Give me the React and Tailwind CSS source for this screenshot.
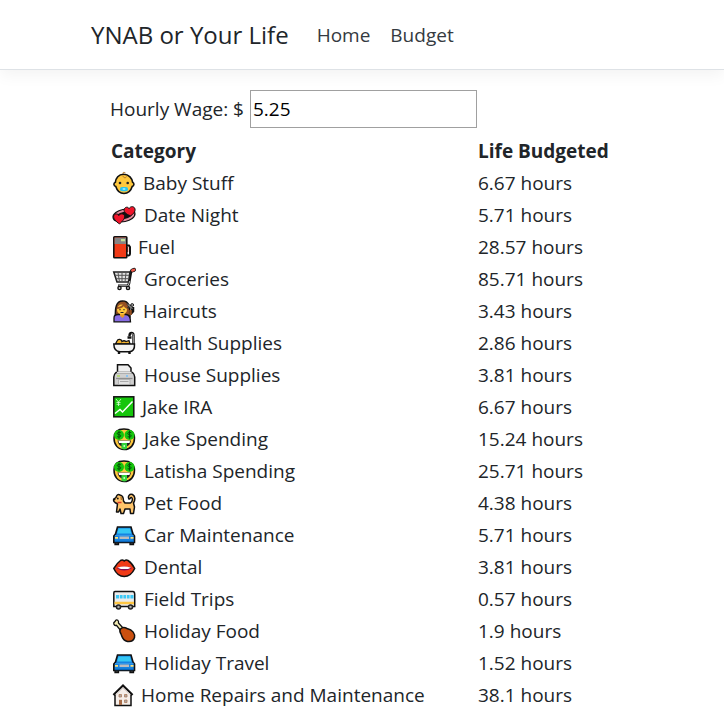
import React from "react";

const paths = {
  baby: {
    w: 23,
    art: (
      <>
        <path d="M11.5 3.200C6.500 3.200 3.800 7.500 3.400 11.200C1.200 12 1.500 15 3.800 15.500C5 19.500 8 22.500 12 22.500S19 19.500 20.200 15.500C22.300 15 22.500 12 20.600 11.200C20.200 7.500 17 3.200 11.500 3.200Z" fill="#ffc83d" stroke="#111" strokeWidth="1.600" />
        <path d="M11.500 3C10 1.500 12 .8 13.500 2M11 4.500C11 7 14 7.500 14.500 5.500" fill="none" stroke="#b07528" strokeWidth="1" />
        <circle cx="8" cy="12" r="1.300" fill="#222" />
        <circle cx="15.700" cy="12" r="1.300" fill="#222" />
        <rect x="8" y="16" width="8" height="4.300" rx="2" fill="#28c4ee" />
        <rect x="10.500" y="17" width="3" height="2" rx="1" fill="#8ce8ff" />
      </>
    ),
  },
  hearts: {
    w: 24,
    art: (
      <>
        <ellipse cx="12" cy="12.500" rx="9.500" ry="4.500" transform="rotate(-12 12 12.500)" fill="#111" stroke="#111" strokeWidth="4.500" />
        <ellipse cx="12" cy="12.500" rx="9.500" ry="4.500" transform="rotate(-12 12 12.500)" fill="none" stroke="#e58b9d" strokeWidth="2" />
        <path d="M18.500 12.800C13.500 11 11 8.500 12.500 5.500C14 3.500 16.500 4 17 5.700C18.500 2.800 22.300 3 23 6C23.500 9 21 11.300 18.500 12.800Z" fill="#f0142a" stroke="#111" strokeWidth="1" />
        <path d="M7.500 21C4 18.500 .8 15.500 1.800 12.500C3.300 10 6 10.800 6.800 12.500C8.500 10 12 10.500 12.700 13C13 16 10 18.500 7.500 21Z" fill="#f0142a" stroke="#111" strokeWidth="1" />
      </>
    ),
  },
  fuel: {
    w: 18,
    art: (
      <>
        <path d="M15 10.500H17L18 12V18.500C18 21 15.500 21 15 19.500" fill="none" stroke="#111" strokeWidth="2" />
        <path d="M15.500 12V17" stroke="#c43220" strokeWidth="1.500" />
        <rect x="1.800" y="1.800" width="13" height="21" rx=".8" fill="#f03a17" stroke="#111" strokeWidth="1.600" />
        <path d="M2.600 2.600H14V9H2.600Z" fill="#858585" />
        <rect x="9" y="4" width="4" height="2.300" fill="#c3df98" />
      </>
    ),
  },
  cart: {
    w: 24,
    art: (
      <>
        <path d="M20.500 3.500L19 4.500L17 16.500L16 18.800H6" fill="none" stroke="#111" strokeWidth="2.600" />
        <path d="M1.800 5H18L16.500 15H5Z" fill="#e2e2e2" stroke="#222" strokeWidth="1.600" />
        <path d="M3 8.300H17M4 11.700H17M6 5.500L7.500 15M10 5.500V15M14 5.500L13 15" stroke="#555" strokeWidth="1" />
        <path d="M6.500 18.800H16L17.800 14" fill="none" stroke="#bbb" strokeWidth="1" />
        <path d="M20.300 3.500L22 2.800" stroke="#111" strokeWidth="4" strokeLinecap="round" />
        <path d="M20.300 3.500L22 2.800" stroke="#ef594a" strokeWidth="2.500" strokeLinecap="round" />
        <g fill="#ccc" stroke="#111" strokeWidth="1.400"><circle cx="7.500" cy="21" r="1.600" /><circle cx="16" cy="21" r="1.600" /></g>
      </>
    ),
  },
  haircut: {
    w: 23,
    art: (
      <>
        <path d="M3.500 18C3 9 4 2 10.500 2S18 7 18 18Z" fill="#965022" stroke="#111" strokeWidth="1.500" />
        <path d="M18 15L20.500 12V8" fill="none" stroke="#111" strokeWidth="3.500" />
        <path d="M2 22.800V19Q2 15.500 6 15.500H14Q18.500 15.500 18.500 22.800Z" fill="#886ce4" stroke="#111" strokeWidth="1.300" />
        <path d="M8 13H12.500V17L10.500 19L8 17Z" fill="#e89a24" />
        <circle cx="10" cy="10.500" r="5" fill="#ffc83d" />
        <path d="M5 9Q11 8.500 12 5Q13 8.500 15.500 9" fill="none" stroke="#965022" strokeWidth="1.800" />
        <path d="M18.500 16V11" stroke="#965022" strokeWidth="2.500" />
        <path d="M15 4.500L20.500 10M20.500 5.500L15.500 9" stroke="#333" strokeWidth="2" />
        <path d="M16 5.500L20 9.500" stroke="#bbb" strokeWidth="1" />
        <circle cx="20.200" cy="6" r="1.400" fill="#aaa" stroke="#222" />
        <path d="M8 10V11.200M12 10V11.200M8.500 13.500H11.500" stroke="#222" strokeWidth="1.100" />
      </>
    ),
  },
  bath: {
    w: 24,
    art: (
      <>
        <path d="M21.500 13V4.500Q21.500 2 19.500 2T17.500 5M15.500 6.500H19.500" fill="none" stroke="#111" strokeWidth="2.400" />
        <path d="M21.500 13V4.500Q21.500 2.500 19.500 2.500" fill="none" stroke="#aaa" strokeWidth=".8" />
        <path d="M3.500 13L5 10C6 7.500 9.500 8 10 10.500Q12 9 14 10.500L17 9.500L18 13Z" fill="#f5b32d" stroke="#111" strokeWidth="1.300" />
        <path d="M1.800 13H22.500Q23 20.500 17 20.800H8Q2 20.500 1.800 13Z" fill="#f3f3f3" stroke="#111" strokeWidth="1.500" />
        <path d="M7 21V23M17.500 21V23" stroke="#111" strokeWidth="2.400" />
      </>
    ),
  },
  printer: {
    w: 24,
    art: (
      <>
        <path d="M5.500 11V1.800H16L19 5V11" fill="#eee" stroke="#111" strokeWidth="1.500" />
        <path d="M4 9.500H20.500Q22.700 11.500 22.700 14V22.500H1.800V14Q1.800 11.500 4 9.500Z" fill="#cfcfcf" stroke="#111" strokeWidth="1.500" />
        <path d="M5 9.500H19.500" stroke="#e0e0e0" strokeWidth="1.500" />
        <path d="M4 15.500H20.500" stroke="#8f8f8f" strokeWidth="1.300" />
        <path d="M6.500 16.500H18V21.500H6.500Z" fill="#e2e2e2" stroke="#aaa" strokeWidth=".8" />
        <path d="M5 13H8" stroke="#a8d84e" strokeWidth="1.300" />
        <path d="M14 13H16" stroke="#70bfff" strokeWidth="1.300" />
        <path d="M8 18.500H16.500" stroke="#aaa" />
      </>
    ),
  },
  chart: {
    w: 22,
    art: (
      <>
        <rect x="1.800" y="1.800" width="20" height="20" fill="#16c60c" stroke="#111" strokeWidth="1.500" />
        <path d="M3 18.500L8 14.500L10.500 17L20.500 6.500" fill="none" stroke="#fff" strokeWidth="1.500" />
        <path d="M4 4L6.500 7L9 4M4.500 7.500H8.500M4.500 9.300H8.500M6.500 7V11" fill="none" stroke="#d9ffd6" strokeWidth=".8" />
      </>
    ),
  },
  money: {
    w: 24,
    art: (
      <>
        <path d="M12 2C6 2 2 5 2 11C2 18 6 22.500 12.200 22.500S22.500 18 22.500 11C22.500 5 18 2 12 2Z" fill="#ffc83d" stroke="#111" strokeWidth="1.500" />
        <circle cx="7" cy="8" r="5" fill="#16c60c" />
        <circle cx="17.500" cy="8" r="5" fill="#16c60c" />
        {[7, 17.5].map((x) => (
          <path key={x} transform={`translate(${x} 7.700)`} d="M1.800-2C-2.500-3.300-2.500 0 0 0S2.500 3.300-1.800 2M0-4V4" fill="none" stroke="#074a0b" strokeWidth="1" />
        ))}
        <path d="M5.500 13.500H19Q18 20 12.300 20T5.500 13.500Z" fill="#222" />
        <path d="M6.500 13.700H18L17.500 16H7Z" fill="#fff" />
        <path d="M9.500 16H15V21.500Q12.300 23.500 9.500 21.500Z" fill="#35d23b" />
        <path d="M11.500 18H13V20H11.500Z" fill="#b7ffba" />
      </>
    ),
  },
  dog: {
    w: 24,
    art: (
      <>
        <path d="M1.800 8L4 6.500Q5 2.500 8 4Q11.500 4.500 11.500 10L13 12H18.500C20.500 10.500 21 7.500 19.500 6.500C18 6 18.500 8.500 17 8C15.500 5.500 17.500 2.300 20.500 3.500C24 5.500 23 9.500 21.500 12L22.500 16L21.500 22.500H18.500L18 18H13L11.500 22.500H9L8 18L6.500 21H4.500L5.500 13L3 11.500Q1 10 1.800 8Z" fill="#ffc56b" stroke="#111" strokeWidth="1.500" strokeLinejoin="round" />
        <path d="M9 5.500L9.500 9" stroke="#b4772c" strokeWidth="1.500" />
        <path d="M5.500 11.500H9.500" stroke="#e03a28" strokeWidth="1.500" />
        <circle cx="5.800" cy="7.500" r=".9" fill="#111" />
        <circle cx="2.500" cy="8.200" r="1" fill="#111" />
      </>
    ),
  },
  car: {
    w: 24,
    art: (
      <>
        <path d="M3 18H6.500V21.500H3ZM18 18H21.500V21.500H18Z" fill="#444" stroke="#111" strokeWidth="1.300" />
        <path d="M5.500 4H19L21 11L22.500 13V19.500H1.800V13L3.500 11Z" fill="#1783e0" stroke="#111" strokeWidth="1.600" />
        <path d="M6.500 5.500H18L19.300 10.500H5.200Z" fill="#35c7f4" />
        <path d="M3 12.500H21.500" stroke="#3298ea" />
        <rect x="7.500" y="13.500" width="9.500" height="2.500" fill="#bcbcbc" />
        <path d="M3 14.800H6M18.500 14.800H21.500" stroke="#ffe37a" strokeWidth="1.800" />
        <path d="M3 18.500H21.500" stroke="#0b63b5" strokeWidth="1.300" />
      </>
    ),
  },
  mouth: {
    w: 24,
    art: (
      <>
        <path d="M1.800 13.500Q5 8 8.500 5.500Q10.500 4.500 12.200 6Q14 4.500 16 5.500Q20 8 22.700 13.500Q19 21.500 12.200 21.500T1.800 13.500Z" fill="#f03a17" stroke="#111" strokeWidth="1.500" />
        <path d="M4.500 13Q12 10 20 13Q12 18 4.500 13Z" fill="#820c55" />
        <path d="M5.500 12.700Q12 10.500 19 12.700L16 14H9Z" fill="#fff" />
      </>
    ),
  },
  bus: {
    w: 24,
    art: (
      <>
        <path d="M3 4.500H21Q22.500 4.500 22.700 7V19.500H1.800V6Q1.800 4.500 3 4.500Z" fill="#ececec" stroke="#111" strokeWidth="1.500" />
        <rect x="4" y="8" width="17.500" height="3.500" fill="#3cc8f5" />
        <path d="M7.500 8V12M11 8V12M14.500 8V12M18 8V12" stroke="#ececec" strokeWidth=".8" />
        <path d="M2.500 16H22" stroke="#ffc642" strokeWidth="2.500" />
        <g fill="#aaa" stroke="#222" strokeWidth="1.500"><circle cx="6.500" cy="20" r="2" /><circle cx="18.500" cy="20" r="2" /></g>
      </>
    ),
  },
  drumstick: {
    w: 24,
    art: (
      <>
        <path d="M1.800 5C1 3 3.500 3 3.500 1.500C5 .2 7 1.500 6.500 4L11.500 9.500L9 12L4.500 6.300Q2.500 7 1.800 5Z" fill="#f4edb4" stroke="#111" strokeWidth="1.300" />
        <path d="M8.500 10Q11 7.500 15 9.500C21 11 23 15 22.500 18.500Q21 23.300 15.500 22.500C10 21.500 10 17 9 15Q7 12 8.500 10Z" fill="#ca5010" stroke="#111" strokeWidth="1.500" />
      </>
    ),
  },
  house: {
    w: 21,
    art: (
      <>
        <path d="M3 10.500L11 3L19 10.500V22.500H3Z" fill="#f5eee9" stroke="#111" strokeWidth="1.500" />
        <path d="M1.500 12.200L11 2.800L20.500 12.200" fill="none" stroke="#111" strokeWidth="2.400" />
        <path d="M3.500 11.500L11 4.300L18.500 11.500" fill="none" stroke="#d8d0cc" strokeWidth="1" />
        <path d="M7 11.500H9.500V14H7ZM12.500 11.500H15V14H12.500ZM12.500 17H15V19.500H12.500Z" fill="#aaa" stroke="#b07c5c" strokeWidth=".8" />
        <path d="M7 16.800H10V22H7Z" fill="#a86d49" />
      </>
    ),
  },
};

function CategoryIcon({ name }) {
  const { w, art } = paths[name];
  return (
    <svg width={w} height="24" viewBox={`0 0 ${w} 24`} className="shrink-0 overflow-visible" aria-hidden="true">
      {art}
    </svg>
  );
}

const rows = [
  ["baby", "Baby Stuff", "6.67"],
  ["hearts", "Date Night", "5.71"],
  ["fuel", "Fuel", "28.57"],
  ["cart", "Groceries", "85.71"],
  ["haircut", "Haircuts", "3.43"],
  ["bath", "Health Supplies", "2.86"],
  ["printer", "House Supplies", "3.81"],
  ["chart", "Jake IRA", "6.67"],
  ["money", "Jake Spending", "15.24"],
  ["money", "Latisha Spending", "25.71"],
  ["dog", "Pet Food", "4.38"],
  ["car", "Car Maintenance", "5.71"],
  ["mouth", "Dental", "3.81"],
  ["bus", "Field Trips", "0.57"],
  ["drumstick", "Holiday Food", "1.9"],
  ["car", "Holiday Travel", "1.52"],
  ["house", "Home Repairs and Maintenance", "38.1"],
];

export default function App() {
  return (
    <div className="min-h-screen bg-white font-['Segoe_UI','Open_Sans',sans-serif] text-[19px] leading-[30px] text-[#212529]">
      <header className="border-b border-[#dee2e6] shadow-[0_5px_15px_rgba(0,0,0,0.05)]">
        <nav className="mx-auto flex h-[69px] max-w-[542px] items-center">
          <a href="#" className="mr-7 text-2xl">YNAB or Your Life</a>
          <a href="#home" className="mr-5 text-[#343a40]">Home</a>
          <a href="#budget" className="text-[#343a40]">Budget</a>
        </nav>
      </header>
      <main className="mx-auto max-w-[504px] pt-5">
        <div className="flex items-center">
          <label htmlFor="wage" className="w-[140px]">Hourly Wage: $</label>
          <input id="wage" type="text" defaultValue="5.25" className="h-[38px] w-[227px] border border-[#a0a0a0] bg-white px-0.5 text-black outline-none" />
        </div>
        <table className="mt-[7px] w-full table-fixed border-collapse text-left">
          <thead>
            <tr className="h-8">
              <th className="w-[367px] p-px font-bold">Category</th>
              <th className="p-px font-bold">Life Budgeted</th>
            </tr>
          </thead>
          <tbody>
            {rows.map(([icon, label, hours]) => (
              <tr key={label} className="h-8">
                <td className="p-px">
                  <div className="flex items-center gap-2 pl-px">
                    <CategoryIcon name={icon} />
                    <span>{label}</span>
                  </div>
                </td>
                <td className="p-px">{hours} hours</td>
              </tr>
            ))}
          </tbody>
        </table>
      </main>
    </div>
  );
}
